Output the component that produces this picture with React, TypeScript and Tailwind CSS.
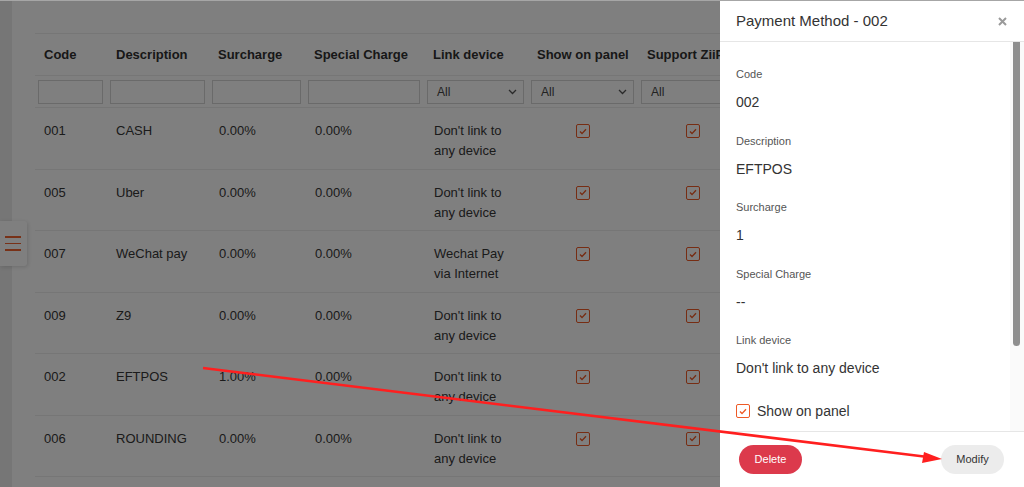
import React from "react";

const cols = [72, 102, 96, 119, 104, 110, 110, 120];

const rows = [
  { code: "001", desc: "CASH", sur: "0.00%", spec: "0.00%", link: ["Don't link to", "any device"] },
  { code: "005", desc: "Uber", sur: "0.00%", spec: "0.00%", link: ["Don't link to", "any device"] },
  { code: "007", desc: "WeChat pay", sur: "0.00%", spec: "0.00%", link: ["Wechat Pay", "via Internet"] },
  { code: "009", desc: "Z9", sur: "0.00%", spec: "0.00%", link: ["Don't link to", "any device"] },
  { code: "002", desc: "EFTPOS", sur: "1.00%", spec: "0.00%", link: ["Don't link to", "any device"] },
  { code: "006", desc: "ROUNDING", sur: "0.00%", spec: "0.00%", link: ["Don't link to", "any device"] },
];

const Check = ({ className = "" }: { className?: string }) => (
  <span
    className={`flex h-[14px] w-[14px] items-center justify-center rounded-[2px] border-[1.5px] border-[#ee5a26] bg-white ${className}`}
  >
    <svg width="8" height="7" viewBox="0 0 8 7" fill="none">
      <path d="M1 3.6 L3 5.6 L7 1.2" stroke="#ee5a26" strokeWidth="1.4" />
    </svg>
  </span>
);

const SelectBox = () => (
  <div className="flex h-[24px] w-full items-center justify-between border border-[#d4d4d4] bg-white pl-[9px] pr-[6px] text-[12px] text-[#444]">
    <span>All</span>
    <svg width="9" height="6" viewBox="0 0 9 6" fill="none">
      <path d="M1 1 L4.5 4.5 L8 1" stroke="#555" strokeWidth="1.3" />
    </svg>
  </div>
);

const Field = ({ label, value }: { label: string; value: string }) => (
  <div className="h-[66.5px]">
    <div className="text-[11px] leading-[16px] text-[#555]">{label}</div>
    <div className="mt-[10px] text-[14px] leading-[20px] text-[#333]">{value}</div>
  </div>
);

export default function App() {
  return (
    <div
      className="relative h-[487px] w-[1024px] overflow-hidden bg-white"
      style={{ fontFamily: '"Liberation Sans", Arial, sans-serif' }}
    >
      {/* page */}
      <div className="flex h-full">
        <div className="w-[12px] shrink-0 bg-[#ececec]" />
        <div className="pl-[23px] pt-[33px] text-[13px] text-[#363636]">
          {/* header */}
          <div className="flex h-[43px] items-center border-y border-[#ececec] font-bold text-[#303030]">
            {["Code", "Description", "Surcharge", "Special Charge", "Link device", "Show on panel", "Support ZiiP", ""].map(
              (h, i) => (
                <div key={i} style={{ width: cols[i] }} className="shrink-0 whitespace-nowrap pl-[9px]">
                  {h}
                </div>
              )
            )}
          </div>
          {/* filters */}
          <div className="flex h-[32px] items-center border-b border-[#ececec]">
            {cols.slice(0, 7).map((w, i) => (
              <div key={i} style={{ width: w }} className="shrink-0 pl-[3px] pr-[4px]">
                {i < 4 ? <div className="h-[24px] border border-[#d4d4d4] bg-white" /> : <SelectBox />}
              </div>
            ))}
          </div>
          {/* rows */}
          {rows.map((r) => (
            <div key={r.code} className="flex h-[61.5px] border-b border-[#ececec] pt-[13px] leading-[20px]">
              <div className="w-[72px] shrink-0 pl-[9px]">{r.code}</div>
              <div className="w-[102px] shrink-0 pl-[9px]">{r.desc}</div>
              <div className="w-[96px] shrink-0 pl-[10px]">{r.sur}</div>
              <div className="w-[119px] shrink-0 pl-[10px]">{r.spec}</div>
              <div className="w-[104px] shrink-0 pl-[10px]">
                <div>{r.link[0]}</div>
                <div>{r.link[1]}</div>
              </div>
              <div className="flex w-[110px] shrink-0 justify-center pt-[3px]">
                <Check />
              </div>
              <div className="flex w-[110px] shrink-0 justify-center pt-[3px]">
                <Check />
              </div>
            </div>
          ))}
        </div>
      </div>

      {/* side menu tab */}
      <div className="absolute left-0 top-[221px] flex h-[45px] w-[27px] flex-col justify-center gap-[5px] rounded-r-[3px] bg-white pl-[5px] shadow-[1px_1px_4px_rgba(0,0,0,0.15)]">
        <span className="h-[1.5px] w-[16px] bg-[#f0622e]" />
        <span className="h-[1.5px] w-[16px] bg-[#f0622e]" />
        <span className="h-[1.5px] w-[16px] bg-[#f0622e]" />
      </div>

      {/* overlay */}
      <div className="absolute inset-0 top-px bg-black/50" />
      <div className="absolute left-0 right-0 top-0 h-px bg-[#a6a6a6]" />

      {/* drawer */}
      <div className="absolute bottom-0 right-0 top-px flex w-[304px] flex-col bg-white">
        <div className="flex h-[41px] shrink-0 items-center justify-between border-b border-[#e6e6e6] pl-[16px] pr-[17px]">
          <span className="text-[15px] text-[#333]">Payment Method - 002</span>
          <svg width="9" height="9" viewBox="0 0 9 9">
            <path d="M1 1 L8 8 M8 1 L1 8" stroke="#9a9a9a" strokeWidth="2" />
          </svg>
        </div>
        <div className="relative flex-1 overflow-hidden">
          <div className="pl-[16px] pt-[24px]">
            <Field label="Code" value="002" />
            <Field label="Description" value="EFTPOS" />
            <Field label="Surcharge" value="1" />
            <Field label="Special Charge" value="--" />
            <Field label="Link device" value="Don't link to any device" />
            <div className="flex items-center gap-[7px] pt-[2px] text-[14px] text-[#333]">
              <Check />
              <span>Show on panel</span>
            </div>
          </div>
          <div className="absolute bottom-0 right-0 top-0 w-[14px] bg-[#fafafa]" />
          <div className="absolute right-[4px] top-0 h-[304px] w-[7px] rounded-b-full bg-[#8f8f8f]" />
        </div>
        <div className="flex h-[56px] shrink-0 items-center justify-between border-t border-[#e6e6e6] pl-[19px] pr-[20px]">
          <button className="h-[29px] w-[63px] rounded-full bg-[#dc3a4c] text-[11px] text-white">Delete</button>
          <button className="h-[29px] w-[63px] rounded-full bg-[#ececec] text-[11px] text-[#333]">Modify</button>
        </div>
      </div>

      {/* annotation arrow */}
      <svg className="pointer-events-none absolute inset-0" width="1024" height="487">
        <line x1="203" y1="368" x2="928" y2="457" stroke="#ff1f1f" strokeWidth="2.5" />
        <polygon points="942,459 924,452 922,463" fill="#ff1f1f" />
      </svg>
    </div>
  );
}
